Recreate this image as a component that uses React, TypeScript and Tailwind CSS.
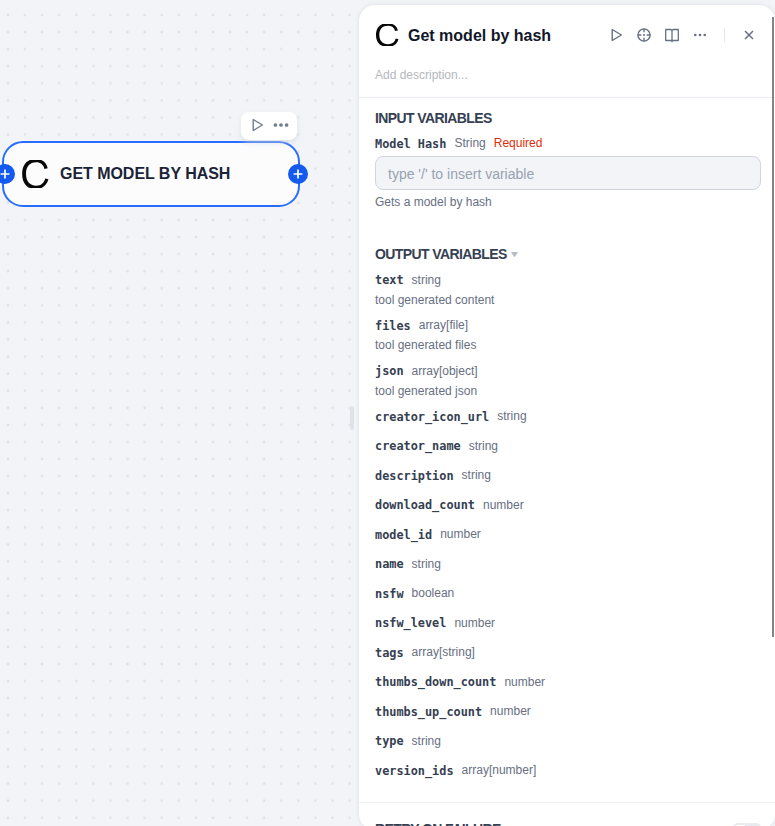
import React from "react";

type Variable = { name: string; type: string; note?: string };

const outputs: Variable[] = [
  { name: "text", type: "string", note: "tool generated content" },
  { name: "files", type: "array[file]", note: "tool generated files" },
  { name: "json", type: "array[object]", note: "tool generated json" },
  { name: "creator_icon_url", type: "string" },
  { name: "creator_name", type: "string" },
  { name: "description", type: "string" },
  { name: "download_count", type: "number" },
  { name: "model_id", type: "number" },
  { name: "name", type: "string" },
  { name: "nsfw", type: "boolean" },
  { name: "nsfw_level", type: "number" },
  { name: "tags", type: "array[string]" },
  { name: "thumbs_down_count", type: "number" },
  { name: "thumbs_up_count", type: "number" },
  { name: "type", type: "string" },
  { name: "version_ids", type: "array[number]" },
];

function PlayIcon() {
  return (
    <svg className="size-4" viewBox="0 0 16 16" fill="none" stroke="currentColor" strokeWidth="1.4" strokeLinejoin="round">
      <path d="M4.2 2.5v11L13.4 8z" />
    </svg>
  );
}

function AimIcon() {
  return (
    <svg className="size-4" viewBox="0 0 16 16" fill="none" stroke="currentColor" strokeWidth="1.4">
      <circle cx="8" cy="8" r="6.1" />
      <path d="M8 1.8v3.5M8 10.7v3.5M1.8 8h3.5M10.7 8h3.5" />
      <circle cx="8" cy="8" r="1" fill="currentColor" stroke="none" />
    </svg>
  );
}

function BookIcon() {
  return (
    <svg className="size-4" viewBox="0 0 16 16" fill="none" stroke="currentColor" strokeWidth="1.3" strokeLinejoin="round">
      <path d="M1.7 2.5H6.5Q8 2.5 8 4Q8 2.5 9.5 2.5H14.3V13.5H1.7zM8 3.5V15.2" />
    </svg>
  );
}

function MoreIcon() {
  return (
    <svg className="size-4" viewBox="0 0 16 16" fill="currentColor">
      <circle cx="3.3" cy="8" r="1.3" />
      <circle cx="8" cy="8" r="1.3" />
      <circle cx="12.7" cy="8" r="1.3" />
    </svg>
  );
}

function CloseIcon() {
  return (
    <svg className="size-4" viewBox="0 0 16 16" fill="none" stroke="currentColor" strokeWidth="1.5">
      <path d="m4 4 8 8M12 4l-8 8" />
    </svg>
  );
}

function Logo({ className }: { className: string }) {
  return (
    <svg className={className} viewBox="0 0 24 24" preserveAspectRatio="none" fill="#080808">
      <path d="M7.6 0H17.3C20.2 1.2 22.2 3.6 22.9 7L20.1 7.7C19.2 4 16.8 2 13 2C7.5 2 4.3 5.6 4.3 11.8C4.3 18.2 7.4 22 13 22C17.1 22 19.8 19.8 20.7 15.8L23.5 16.6C22.5 20.2 20.5 22.8 17.5 24H7.6C3.4 22.2 1 17.8 1 11.9C1 6.2 3.4 1.8 7.6 0z" />
    </svg>
  );
}

function Port({ className }: { className: string }) {
  return (
    <div className={`absolute size-5 rounded-full bg-[#155aef] text-white ${className}`}>
      <svg className="size-5" viewBox="0 0 20 20" fill="none" stroke="currentColor" strokeWidth="1.7">
        <path d="M10 5.6v8.8M5.6 10h8.8" />
      </svg>
    </div>
  );
}

function VariableRow({ name, type, note }: Variable) {
  return (
    <div className={note ? "h-[45.53px]" : "h-[29.5px]"}>
      <div className="flex h-[18px] items-center gap-2">
        <span className="relative top-[0.5px] font-['DejaVu_Sans_Mono',monospace] text-[11.87px] leading-[18px] font-bold text-[#354052]">{name}</span>
        <span className="text-xs leading-[18px] text-[#676f83]">{type}</span>
      </div>
      {note && <div className="mt-[3px] text-xs leading-4 text-[#676f83]">{note}</div>}
    </div>
  );
}

export default function App() {
  return (
    <div className="relative flex h-[826px] w-[775px] overflow-hidden bg-[#f2f4f8] font-['Liberation_Sans',Arial,sans-serif]">
      <div className="relative w-[359px] shrink-0">
        <svg className="absolute inset-0 h-full w-full">
          <defs>
            <pattern id="dots" x="-.5" y="6.5" width="17.08" height="17.08" patternUnits="userSpaceOnUse">
              <circle cx="8.5" cy="8.5" r="1.35" fill="#dfe1e6" />
            </pattern>
          </defs>
          <rect width="100%" height="100%" fill="url(#dots)" />
        </svg>
        <div className="absolute top-[141px] left-[2px] flex h-[66px] w-[298px] items-center rounded-[21px] border-2 border-[#296dff] bg-[#fcfcfd] pl-[17px]">
          <Logo className="h-7 w-[28px]" />
          <span className="ml-[11px] text-base font-bold tracking-[-0.04px] whitespace-nowrap text-[#1b2437]">GET MODEL BY HASH</span>
        </div>
        <Port className="top-[164px] left-[-5px]" />
        <Port className="top-[164px] left-[288px]" />
        <div className="absolute top-[112px] left-[241px] flex h-7 w-[56px] items-center justify-center gap-2 rounded-lg bg-white pb-0.5 text-[#747c90] shadow-md shadow-gray-300/50">
          <PlayIcon />
          <svg className="size-4" viewBox="0 0 16 16" fill="currentColor">
            <circle cx="2.4" cy="8" r="1.85" />
            <circle cx="8" cy="8" r="1.85" />
            <circle cx="13.6" cy="8" r="1.85" />
          </svg>
        </div>
        <div className="absolute top-[406px] left-[350px] h-6 w-1 rounded-full bg-[#dfe2e8]" />
      </div>

      <main className="relative mt-[5px] h-[825px] w-[416px] shrink-0 overflow-hidden rounded-2xl bg-white shadow-[0_0_5px_rgba(16,24,40,0.09)]">
        <header className="h-[93px] border-b border-[#e9ebf0] pl-4">
          <div className="flex h-[60px] items-center">
            <Logo className="h-[22px] w-6" />
            <h1 className="relative top-px ml-[9px] w-[200px] text-base font-bold text-[#101828]">Get model by hash</h1>
            <div className="flex items-center gap-3 text-[#676f83]">
              <PlayIcon />
              <AimIcon />
              <BookIcon />
              <MoreIcon />
            </div>
            <div className="ml-4 h-3.5 w-px bg-[#e5e7eb]" />
            <div className="ml-4 text-[#676f83]"><CloseIcon /></div>
          </div>
          <p className="mt-[2px] text-xs leading-4 text-[#b4b7be]">Add description...</p>
        </header>

        <section className="pt-[10px] pl-4">
          <h2 className="text-[14px] leading-5 font-bold tracking-[-0.6px] text-[#354052]">INPUT VARIABLES</h2>
          <div className="mt-[6px] flex h-[18px] items-center text-xs">
            <span className="relative top-[2px] font-['DejaVu_Sans_Mono',monospace] text-[11.87px] font-bold text-[#354052]">Model Hash</span>
            <span className="ml-2 text-[#676f83]">String</span>
            <span className="ml-2 text-[#df2b08]">Required</span>
          </div>
          <div className="mt-1 flex h-[34px] w-[386px] items-center rounded-lg border border-[#d0d5dd] bg-[#f2f4f7] px-3 pt-[2px] text-[14px] text-[#98a2b2]">
            type '/' to insert variable
          </div>
          <p className="mt-1 text-xs leading-4 text-[#676f83]">Gets a model by hash</p>
        </section>

        <section className="mt-[34px] h-[559px] border-b border-[#f0f1f4] pl-4">
          <h2 className="flex items-center text-[14px] leading-5 font-bold tracking-[-0.6px] text-[#354052]">
            OUTPUT VARIABLES
            <svg className="ml-[4px] h-[5px] w-[7px]" viewBox="0 0 7 5"><path d="M.7 0h5.6q.9 0 .4.8L4.2 4.4q-.7.8-1.4 0L.3.8Q-.2 0 .7 0" fill="#b8bcc5" /></svg>
          </h2>
          <div className="mt-[6.7px]">
            {outputs.map((item) => <VariableRow key={item.name} {...item} />)}
          </div>
        </section>
        <section className="flex pt-[16px] pl-4">
          <h2 className="w-[358px] text-[14px] leading-5 font-bold tracking-[-0.6px] text-[#354052]">RETRY ON FAILURE</h2>
          <div className="mt-1 h-4 w-7 shrink-0 rounded-[5px] bg-[#e9ebf0] p-0.5"><div className="h-3 w-[11px] rounded-[3px] bg-white" /></div>
        </section>
        <div className="absolute top-[12px] right-px h-[620px] w-0.5 bg-[#858585]" />
      </main>
    </div>
  );
}
